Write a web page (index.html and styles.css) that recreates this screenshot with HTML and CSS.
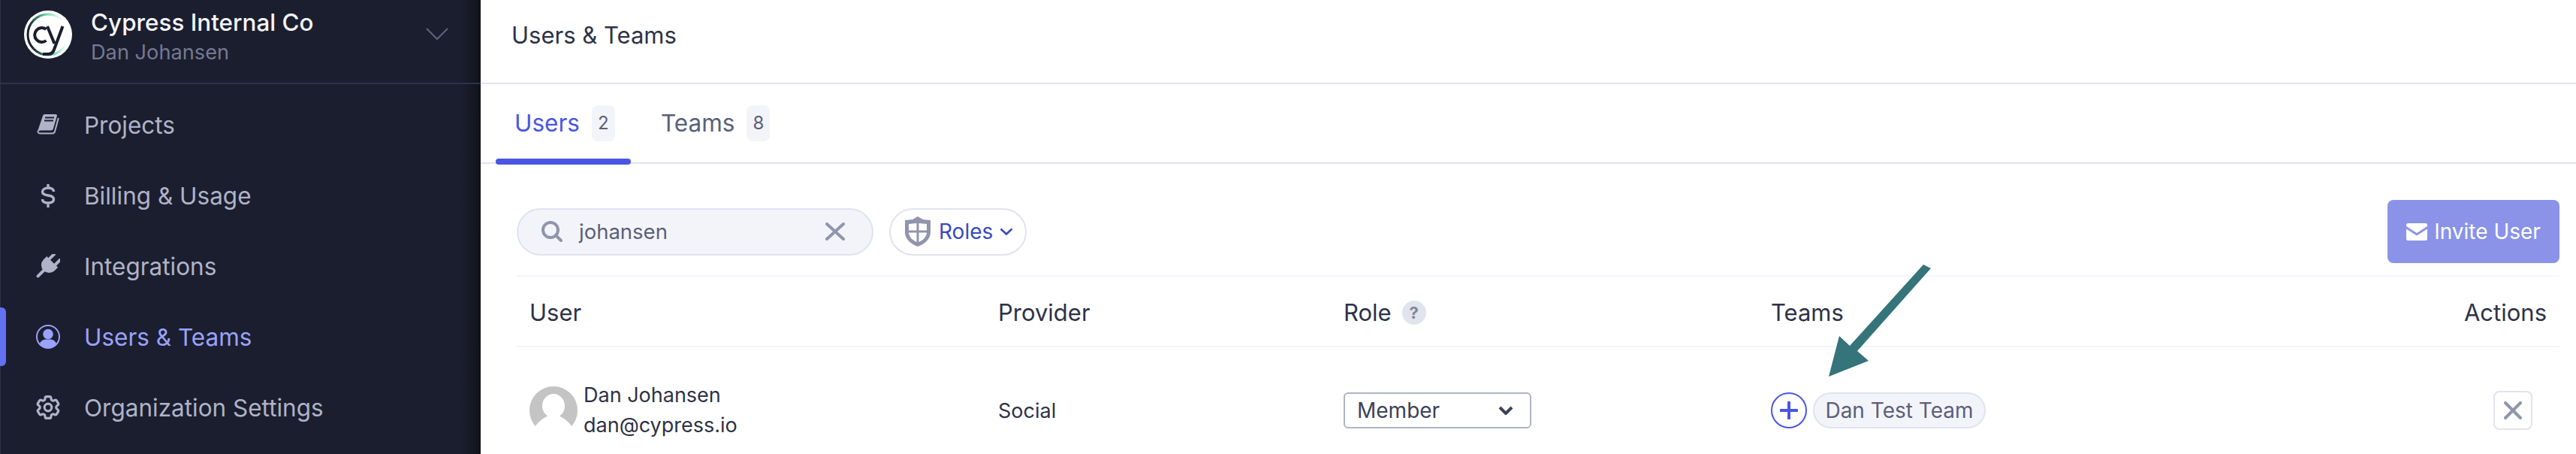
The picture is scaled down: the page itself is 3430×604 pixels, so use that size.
FILE: index.html
```html
<!DOCTYPE html>
<html lang="en">
<head>
    <meta charset="UTF-8">
    <title>Users &amp; Teams</title>
    <link rel="stylesheet" href="styles.css">
</head>
<body>
    <aside class="sidebar">
        <div class="org-header">
            <svg class="org-logo" viewBox="0 0 64 64">
                <defs>
                    <linearGradient id="ring" gradientUnits="userSpaceOnUse" x1="10" y1="50" x2="56" y2="42">
                        <stop offset="0" stop-color="#1b1e2e"/>
                        <stop offset="0.3" stop-color="#2f7d62"/>
                        <stop offset="0.55" stop-color="#69d3a7"/>
                        <stop offset="1" stop-color="#ffffff"/>
                    </linearGradient>
                </defs>
                <circle cx="32" cy="32" r="32" fill="#fff"/>
                <circle cx="32" cy="32" r="27" fill="none" stroke="url(#ring)" stroke-width="3"/>
                <path d="M29.5 25 A9.5 9.5 0 1 0 29.5 40" fill="none" stroke="#1b1e2e" stroke-width="4"/>
                <path d="M31 21 L40.5 44 M51.5 21 L40 52 Q38 58 32 58 H25" fill="none" stroke="#1b1e2e" stroke-width="4"/>
            </svg>
            <div class="org-text">
                <div class="org-name">Cypress Internal Co</div>
                <div class="org-user">Dan Johansen</div>
            </div>
            <svg class="org-chevron" viewBox="0 0 30 16"><path d="M1 1 L15 15 L29 1" fill="none" stroke="#5f6479" stroke-width="2"/></svg>
        </div>
        <nav class="side-nav">
            <a class="nav-item">
                <svg class="nav-icon" viewBox="0 0 32 32">
                    <path d="M9 4 Q9.5 2 12 2 H26 Q28.5 2 27.8 4.5 L22.8 21.5 Q22.2 23.5 20 23.5 H7 Q3 23.5 1.6 26 Z" fill="currentColor"/>
                    <path d="M29.8 7 L25 25 Q24.3 27.5 21.5 27.5 H6 Q2 27.5 2.5 24" fill="none" stroke="currentColor" stroke-width="2"/>
                    <path d="M12 6.5 H24 M11 10.5 H23" stroke="#1b1e2e" stroke-width="2"/>
                </svg>
                Projects
            </a>
            <a class="nav-item">
                <svg class="nav-icon" viewBox="0 0 32 32">
                    <path d="M23.5 11 C23.5 7.5 20 6 16 6 C12 6 8.5 8 8.5 11 C8.5 14.5 12 15.5 16 16 C20 16.5 23.5 17.5 23.5 21 C23.5 24.5 20 26 16 26 C12 26 8.5 24.5 8.5 21 M16 1 V6 M16 26 V32" fill="none" stroke="currentColor" stroke-width="3.4"/>
                </svg>
                Billing &amp; Usage
            </a>
            <a class="nav-item">
                <svg class="nav-icon" viewBox="0 0 32 32">
                    <g transform="rotate(45 16 16)" fill="currentColor">
                        <path d="M5.5 8 H26.5 V14 A10.5 10.5 0 0 1 5.5 14 Z"/>
                        <rect x="8.5" y="-3" width="4" height="13" rx="2"/>
                        <rect x="19.5" y="-3" width="4" height="13" rx="2"/>
                        <rect x="14" y="20" width="4" height="17" rx="2"/>
                    </g>
                </svg>
                Integrations
            </a>
            <a class="nav-item active">
                <svg class="nav-icon" viewBox="0 0 32 32">
                    <circle cx="16" cy="16" r="15" fill="none" stroke="currentColor" stroke-width="2"/>
                    <circle cx="16" cy="12.5" r="6.8" fill="currentColor"/>
                    <path d="M4.5 26 C6 21.5 10 19.5 13 19.5 H19 C22 19.5 26 21.5 27.5 26 A15.5 15.5 0 0 1 4.5 26 Z" fill="currentColor"/>
                </svg>
                Users &amp; Teams
            </a>
            <a class="nav-item">
                <svg class="nav-icon" viewBox="2 2 20 20" fill="none" stroke="currentColor" stroke-width="2">
                    <path d="M9.594 3.94c.09-.542.56-.94 1.11-.94h2.593c.55 0 1.02.398 1.11.94l.213 1.281c.063.374.313.686.645.87.074.04.147.083.22.127.324.196.72.257 1.075.124l1.217-.456a1.125 1.125 0 011.37.49l1.296 2.247a1.125 1.125 0 01-.26 1.431l-1.003.827c-.293.24-.438.613-.431.992a6.759 6.759 0 010 .255c-.007.378.138.75.43.99l1.005.828c.424.35.534.954.26 1.43l-1.298 2.247a1.125 1.125 0 01-1.369.491l-1.217-.456c-.355-.133-.75-.072-1.076.124a6.57 6.57 0 01-.22.128c-.331.183-.581.495-.644.869l-.213 1.28c-.09.543-.56.941-1.11.941h-2.594c-.55 0-1.02-.398-1.11-.94l-.213-1.281c-.062-.374-.312-.686-.644-.87a6.52 6.52 0 01-.22-.127c-.325-.196-.72-.257-1.076-.124l-1.217.456a1.125 1.125 0 01-1.369-.49l-1.297-2.247a1.125 1.125 0 01.26-1.431l1.004-.827c.292-.24.437-.613.43-.992a6.932 6.932 0 010-.255c.007-.378-.138-.75-.43-.99l-1.004-.828a1.125 1.125 0 01-.26-1.43l1.297-2.247a1.125 1.125 0 011.37-.491l1.216.456c.356.133.751.072 1.076-.124.072-.044.146-.087.22-.128.332-.183.582-.495.644-.869l.214-1.281z"/>
                    <circle cx="12" cy="12" r="3"/>
                </svg>
                Organization Settings
            </a>
        </nav>
    </aside>

    <main class="main">
        <header class="page-header">Users &amp; Teams</header>

        <div class="tabs">
            <div class="tab active">Users <span class="tab-count">2</span></div>
            <div class="tab">Teams <span class="tab-count">8</span></div>
        </div>

        <section class="content">
            <div class="toolbar">
                <div class="search">
                    <svg class="search-icon" viewBox="0 0 28 28"><circle cx="12" cy="12" r="10" fill="none" stroke="#9095ad" stroke-width="4"/><path d="M19 19 L26 26" stroke="#9095ad" stroke-width="4" stroke-linecap="round"/></svg>
                    <span class="search-text">johansen</span>
                    <svg class="search-clear" viewBox="0 0 26 24"><path d="M2 2 L24 22 M24 2 L2 22" stroke="#9095ad" stroke-width="4" stroke-linecap="round"/></svg>
                </div>
                <div class="roles-filter">
                    <svg class="roles-icon" viewBox="0 0 36 40">
                        <path d="M18 0 L25 4 L35 5 V21 C35 31 26 37 18 40 C10 37 1 31 1 21 V5 L11 4 Z" fill="#9095ad"/>
                        <path d="M6 10 L16.5 9 V18.5 H6 Z M19.5 9 L30 10 V18.5 H19.5 Z M6 21.5 H16.5 V34 C10 31 6.5 27 6 21.5 Z M19.5 21.5 H30 C29.5 27 26 31 19.5 34 Z" fill="#fff"/>
                    </svg>
                    <span class="roles-text">Roles</span>
                    <svg class="roles-chevron" viewBox="0 0 18 10"><path d="M1.5 1.5 L9 8.5 L16.5 1.5" fill="none" stroke="#3949c4" stroke-width="2.6"/></svg>
                </div>
                <button class="invite-btn">
                    <svg class="invite-icon" viewBox="0 0 28 23">
                        <path d="M2.5 0 H25.5 A2.5 2.5 0 0 1 28 2.5 V4 L14 13 L0 4 V2.5 A2.5 2.5 0 0 1 2.5 0 Z M0 7.5 L14 16.5 L28 7.5 V20.5 A2.5 2.5 0 0 1 25.5 23 H2.5 A2.5 2.5 0 0 1 0 20.5 Z" fill="#fff"/>
                    </svg>
                    Invite User
                </button>
            </div>

            <div class="table-row table-head">
                <div>User</div>
                <div>Provider</div>
                <div class="role-head">Role <span class="help-dot">?</span></div>
                <div>Teams</div>
                <div class="actions-head">Actions</div>
            </div>

            <div class="table-row table-body">
                <div class="user-cell">
                    <svg class="avatar" viewBox="0 0 64 64">
                        <circle cx="32" cy="32" r="32" fill="#c4c4c4"/>
                        <ellipse cx="32" cy="26" rx="15" ry="16" fill="#fff"/>
                        <path d="M5 58 C10 47 18 43 25 39 H39 C46 43 54 47 59 58 L64 64 H0 Z" fill="#fff"/>
                    </svg>
                    <div>
                        <div class="user-name">Dan Johansen</div>
                        <div class="user-email">dan@cypress.io</div>
                    </div>
                </div>
                <div>Social</div>
                <div>
                    <div class="role-select">
                        Member
                        <svg class="select-chevron" viewBox="0 0 20 12"><path d="M2 2 L10 10 L18 2" fill="none" stroke="#3d4159" stroke-width="4"/></svg>
                    </div>
                </div>
                <div class="teams-cell">
                    <span class="add-team"><svg viewBox="0 0 24 24"><path d="M12 1 V23 M1 12 H23" stroke="#4956e3" stroke-width="4" stroke-linecap="round"/></svg></span>
                    <span class="team-chip">Dan Test Team</span>
                </div>
                <div class="actions-cell">
                    <span class="remove-btn"><svg viewBox="0 0 24 24"><path d="M2 2 L22 22 M22 2 L2 22" stroke="#9095ad" stroke-width="4" stroke-linecap="round"/></svg></span>
                </div>
            </div>
        </section>

        <!-- annotation drawn over the screenshot -->
        <svg class="arrow" viewBox="0 0 145 155">
            <polygon points="131,2 141,7 43,117 58,130 5,151 19,97 33,110" fill="#35747b"/>
        </svg>
    </main>
</body>
</html>
```

FILE: styles.css
```css
* {
    margin: 0;
    padding: 0;
    box-sizing: border-box;
}

html, body {
    height: 604px;
    overflow: hidden;
}

body {
    display: flex;
    font-family: Inter, 'Liberation Sans', sans-serif;
    background: #fff;
    color: #2e3247;
}

/* sidebar */
.sidebar {
    width: 640px;
    flex-shrink: 0;
    background: linear-gradient(90deg, #1b1e2e 96%, #11121b 100%);
    border-left: 1px solid #2e3247;
}

.org-header {
    height: 112px;
    display: flex;
    align-items: flex-start;
    padding: 14px 43px 0 31px;
    border-bottom: 2px solid #2e3247;
}

.org-logo {
    width: 64px;
    height: 64px;
    flex-shrink: 0;
}

.org-text {
    margin-left: 25px;
    flex: 1;
}

.org-name {
    font-size: 31.4px;
    line-height: 32px;
    font-weight: 500;
    color: #f3f4fa;
}

.org-user {
    font-size: 27.2px;
    line-height: 32px;
    margin-top: 8px;
    color: #747994;
}

.org-chevron {
    width: 30px;
    height: 16px;
    margin-top: 23px;
}

.side-nav {
    padding-top: 7px;
}

.nav-item {
    position: relative;
    height: 94px;
    display: flex;
    align-items: center;
    gap: 32px;
    padding-left: 47px;
    font-size: 31.5px;
    color: #afb3c7;
}

.nav-item.active {
    color: #9aa2fc;
}

.nav-item.active::before {
    content: '';
    position: absolute;
    left: -1px;
    top: 8px;
    width: 8px;
    height: 78px;
    background: #6470f3;
    border-radius: 0 6px 6px 0;
}

.nav-icon {
    width: 32px;
    height: 32px;
    flex-shrink: 0;
}

/* main area */
.main {
    position: relative;
    flex: 1;
    min-width: 0;
}

.page-header {
    height: 112px;
    padding: 0 0 18px 41px;
    display: flex;
    align-items: center;
    font-size: 31px;
    border-bottom: 2px solid #e1e3ed;
}

.tabs {
    height: 106px;
    display: flex;
    gap: 40px;
    padding-left: 20px;
    border-bottom: 2px solid #e1e3ed;
}

.tab {
    position: relative;
    width: 180px;
    height: 100%;
    padding: 28px 0 0 25px;
    display: flex;
    gap: 16px;
    align-items: flex-start;
    font-size: 31.5px;
    line-height: 48px;
    color: #5a5f7a;
}

.tab + .tab {
    padding-left: 0;
    width: auto;
}

.tab.active {
    color: #4956e3;
}

.tab.active::after {
    content: '';
    position: absolute;
    left: 0;
    right: 0;
    bottom: -3px;
    height: 8px;
    background: #4956e3;
    border-radius: 4px;
}

.tab-count {
    width: 31px;
    height: 48px;
    display: flex;
    align-items: center;
    justify-content: center;
    background: #f3f4fa;
    border-radius: 8px;
    font-size: 24px;
    color: #5a5f7a;
}

.content {
    padding: 0 22px 0 48px;
}

.toolbar {
    height: 84px;
    margin-top: 48px;
    margin-bottom: 16px;
    display: flex;
    align-items: center;
}

.search {
    width: 475px;
    height: 63px;
    display: flex;
    align-items: center;
    padding: 0 36px 0 31px;
    background: #f3f4fa;
    border: 2px solid #e1e3ed;
    border-radius: 32px;
}

.search-icon {
    width: 28px;
    height: 28px;
}

.search-text {
    flex: 1;
    margin-left: 22px;
    font-size: 27.5px;
    color: #5a5f7a;
}

.search-clear {
    width: 26px;
    height: 24px;
}

.roles-filter {
    width: 183px;
    height: 63px;
    margin-left: 21px;
    display: flex;
    align-items: center;
    padding-left: 18px;
    border: 2px solid #e1e3ed;
    border-radius: 32px;
}

.roles-icon {
    width: 36px;
    height: 40px;
}

.roles-text {
    margin-left: 10px;
    font-size: 28px;
    color: #3949c4;
}

.roles-chevron {
    width: 18px;
    height: 10px;
    margin-left: 9px;
}

.invite-btn {
    width: 229px;
    height: 84px;
    margin-left: auto;
    display: flex;
    align-items: center;
    justify-content: center;
    gap: 9px;
    font-family: inherit;
    font-size: 28px;
    color: #fff;
    background: #8a93e8;
    border: none;
    border-radius: 8px;
}

.invite-icon {
    width: 28px;
    height: 23px;
}

/* table */
.table-row {
    display: grid;
    grid-template-columns: 624px 460px 569px 1fr 220px;
    align-items: center;
    padding: 0 17px;
}

.table-head {
    height: 96px;
    padding-top: 3px;
    font-size: 31px;
    border-top: 2px solid #f3f4fa;
    border-bottom: 2px solid #f3f4fa;
}

.role-head {
    display: flex;
    align-items: center;
    gap: 14px;
}

.help-dot {
    width: 32px;
    height: 32px;
    display: flex;
    align-items: center;
    justify-content: center;
    font-size: 22px;
    font-weight: 700;
    color: #7f849c;
    background: #e1e3ed;
    border-radius: 50%;
}

.actions-head {
    text-align: right;
}

.table-body {
    height: 168px;
    font-size: 27px;
}

.user-cell {
    display: flex;
    align-items: center;
    gap: 8px;
}

.avatar {
    width: 64px;
    height: 64px;
}

.user-name,
.user-email {
    line-height: 40px;
}

.role-select {
    width: 250px;
    height: 48px;
    display: flex;
    align-items: center;
    justify-content: space-between;
    padding: 0 22px 0 16px;
    border: 2px solid #afb3c7;
    border-radius: 6px;
    font-size: 28px;
    color: #3d4159;
}

.select-chevron {
    width: 20px;
    height: 12px;
}

.teams-cell {
    display: flex;
    gap: 8px;
    font-size: 28px;
    color: #5a5f7a;
}

.add-team {
    width: 48px;
    height: 48px;
    display: flex;
    align-items: center;
    justify-content: center;
    border: 2px solid #4956e3;
    border-radius: 50%;
}

.add-team svg {
    width: 24px;
    height: 24px;
}

.team-chip {
    width: 230px;
    height: 48px;
    display: flex;
    align-items: center;
    justify-content: center;
    background: #f3f4fa;
    border: 2px solid #e1e3ed;
    border-radius: 24px;
}

.actions-cell {
    display: flex;
    justify-content: flex-end;
    padding-right: 19px;
}

.remove-btn {
    width: 52px;
    height: 52px;
    display: flex;
    align-items: center;
    justify-content: center;
    border: 2px solid #e1e3ed;
    border-radius: 8px;
}

.remove-btn svg {
    width: 24px;
    height: 24px;
}

.arrow {
    position: absolute;
    left: 1790px;
    top: 350px;
    width: 145px;
    height: 155px;
}
```
